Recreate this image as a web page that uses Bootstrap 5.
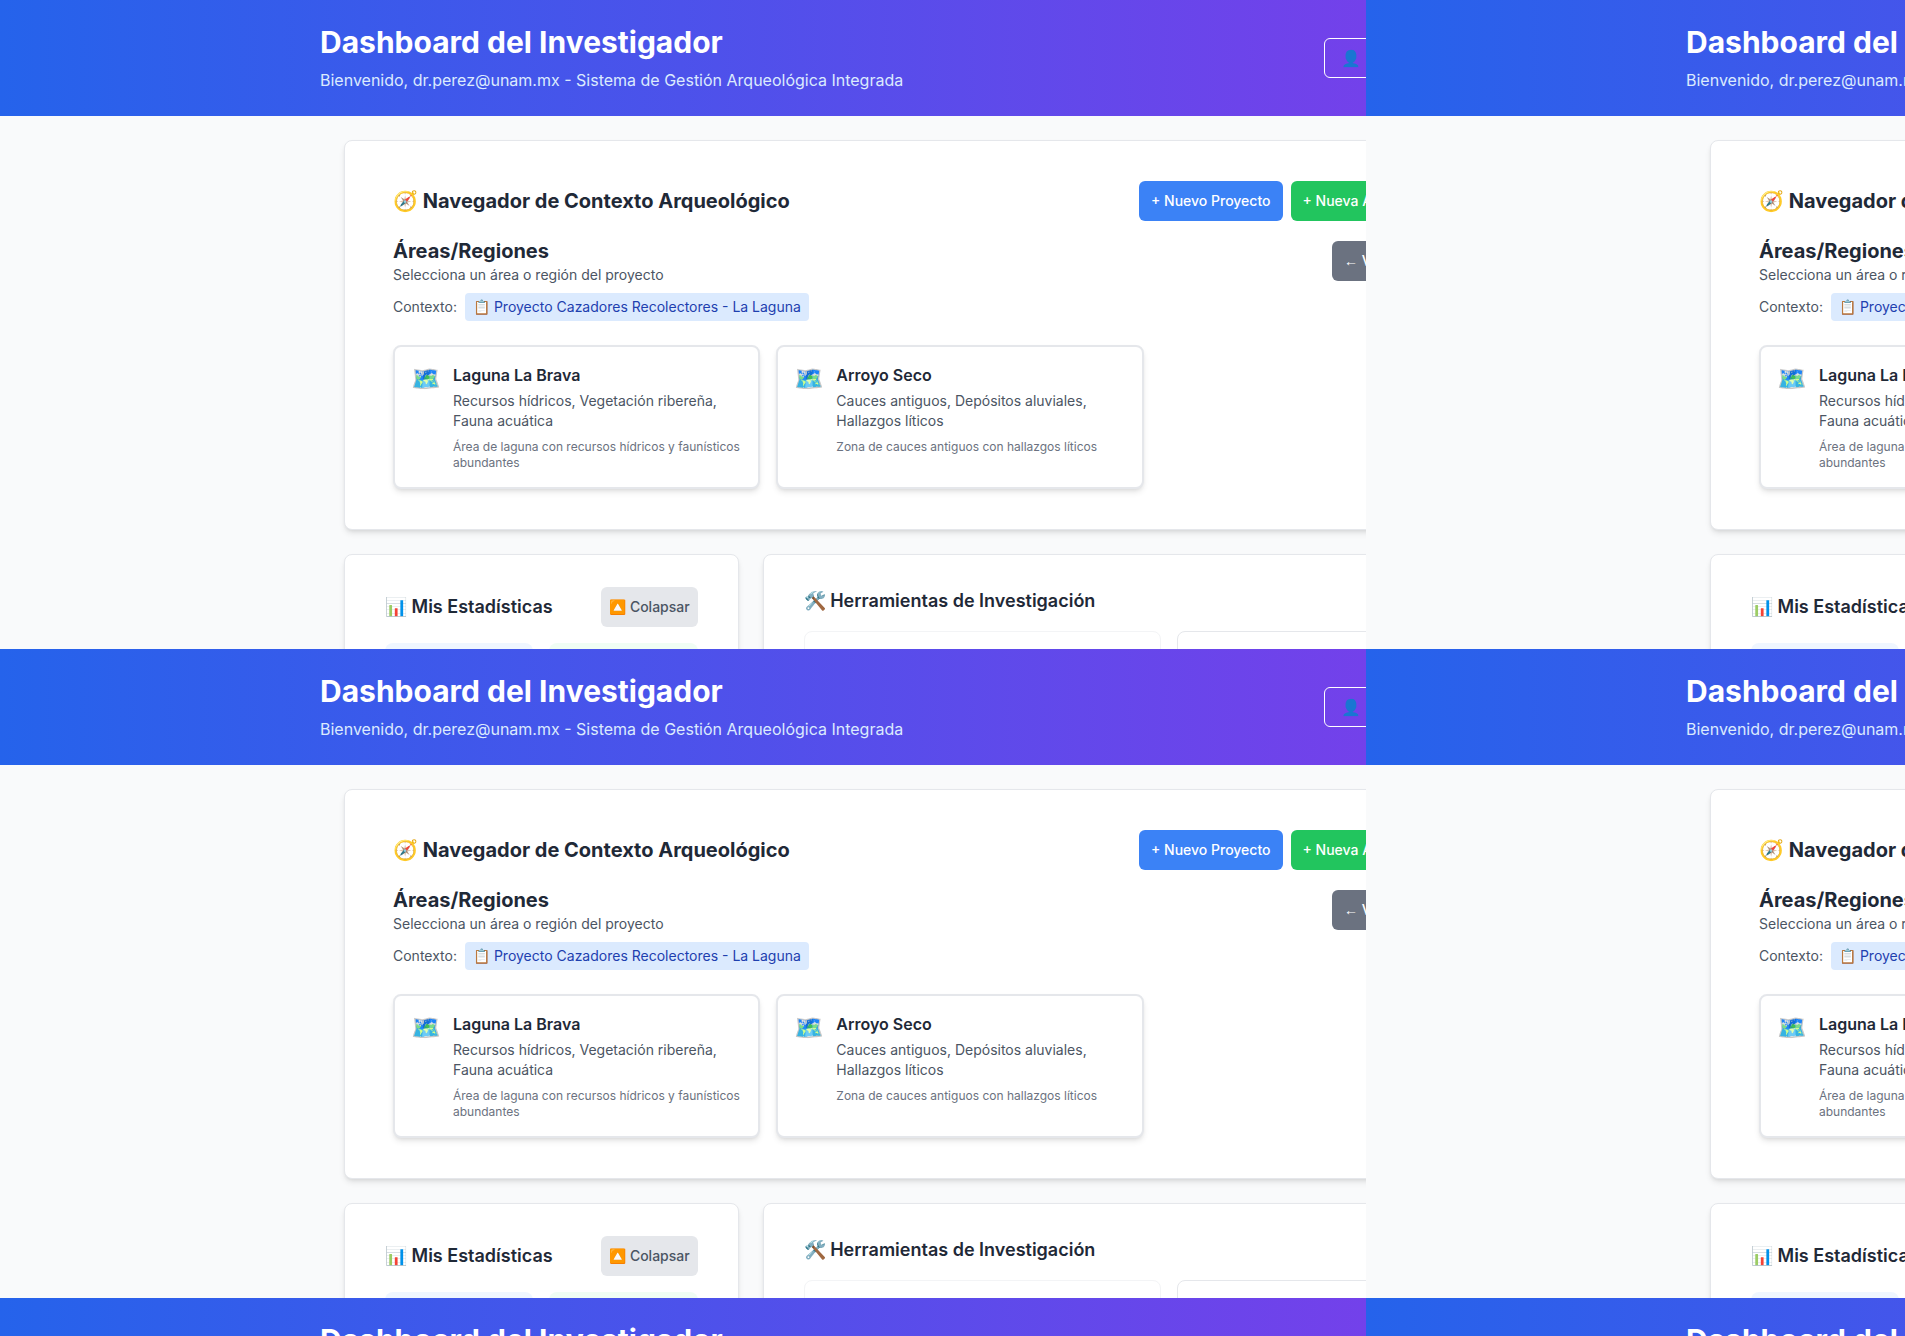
<!DOCTYPE html>
<html lang="es">
<head>
<meta charset="utf-8">
<meta name="viewport" content="width=device-width, initial-scale=1">
<title>Dashboard del Investigador</title>
<link href="https://cdn.jsdelivr.net/npm/bootstrap@5.3.0/dist/css/bootstrap.min.css" rel="stylesheet">
<style>
  body { font-family: Inter, "Noto Sans", sans-serif; font-size: 14px; line-height: 20px; color: #1f2937; background: #f9fafb; }
  h1, h2, h3, h4, p { margin: 0; }
  .wall { display: grid; grid-template-columns: repeat(2, 1366px); grid-auto-rows: 649px; height: 100vh; overflow: hidden; }
  .pane { overflow: hidden; background: #f9fafb; }
  .screen { width: 1920px; }
  .shell { max-width: 1280px; margin: 0 auto; }
  .topbar { background: linear-gradient(90deg, #2563eb, #9333ea); padding: 24px 0; }
  .topbar h1 { font-size: 30px; line-height: 36px; font-weight: 700; color: #fff; }
  .topbar p { font-size: 16px; line-height: 24px; color: #dbeafe; margin-top: 8px; }
  .btn { --bs-btn-font-size: 14px; --bs-btn-line-height: 20px; --bs-btn-font-weight: 500; --bs-btn-padding-x: 12px; --bs-btn-padding-y: 10px; --bs-btn-border-width: 0; --bs-btn-border-radius: 6px; --bs-btn-color: #fff; white-space: nowrap; }
  .btn-user { --bs-btn-font-size: 16px; --bs-btn-border-width: 1px; --bs-btn-border-color: #fff; --bs-btn-padding-x: 16px; --bs-btn-padding-y: 9px; }
  .btn-project { --bs-btn-bg: #3b82f6; }
  .btn-area { --bs-btn-bg: #22c55e; }
  .btn-back { --bs-btn-bg: #6b7280; }
  .btn-fold { --bs-btn-bg: #e5e7eb; --bs-btn-color: #4b5563; --bs-btn-padding-x: 8px; }
  .arrow { font-family: "Liberation Sans", sans-serif; line-height: 1; }
  .account { width: 276px; }
  .actions { width: 388px; }
  .backbox { width: 195px; }
  .panel { background: #fff; border: 1px solid #e5e7eb; border-radius: 8px; box-shadow: 0 4px 6px -1px rgba(0,0,0,.1), 0 2px 4px -2px rgba(0,0,0,.1); }
  .panel-nav { padding: 40px 48px; }
  .panel-side { padding: 32px 40px; min-height: 400px; }
  .panel h2 { font-size: 20px; line-height: 28px; font-weight: 700; }
  .panel h3 { font-size: 18px; line-height: 28px; font-weight: 600; }
  .soft { color: #4b5563; }
  .chip { background: #dbeafe; color: #1e40af; border-radius: 4px; padding: 4px 8px; }
  .thirds { display: grid; grid-template-columns: repeat(3, 1fr); gap: 16px; }
  .lower { display: grid; grid-template-columns: repeat(3, 1fr); gap: 24px; }
  .span-two { grid-column: span 2; }
  .halves { display: grid; grid-template-columns: 1fr 1fr; gap: 16px; margin-top: 16px; }
  .place { border: 2px solid #e5e7eb; border-radius: 8px; padding: 16px; gap: 12px; background: #fff; box-shadow: 0 4px 6px -1px rgba(0,0,0,.1), 0 2px 4px -2px rgba(0,0,0,.1); }
  .place-icon { font-size: 24px; line-height: 32px; }
  .place h4 { font-size: 16px; line-height: 24px; font-weight: 600; }
  .place-note { font-size: 12px; line-height: 16px; color: #6b7280; margin-top: 8px; }
  .tile { height: 96px; border-radius: 8px; }
  .tile-blue { background: #eff6ff; }
  .tile-green { background: #f0fdf4; }
  .tool { height: 160px; border: 1px solid #e5e7eb; border-radius: 8px; }
  .tool-faint { border-color: #f3f4f6; }
</style>
</head>
<body>
<div class="wall" id="wall"></div>

<template id="screen">
  <section class="pane">
    <div class="screen">
      <header class="topbar">
        <div class="shell d-flex justify-content-between align-items-center">
          <div>
            <h1>Dashboard del Investigador</h1>
            <p>Bienvenido, dr.perez@unam.mx - Sistema de Gestión Arqueológica Integrada</p>
          </div>
          <div class="account"><button type="button" class="btn btn-user" aria-label="Perfil">👤</button></div>
        </div>
      </header>
      <main class="shell p-4 d-flex flex-column gap-4">
        <section class="panel panel-nav">
          <div class="d-flex justify-content-between align-items-center mb-3">
            <h2>🧭 Navegador de Contexto Arqueológico</h2>
            <div class="actions d-flex gap-2">
              <button type="button" class="btn btn-project">+ Nuevo Proyecto</button>
              <button type="button" class="btn btn-area">+ Nueva Área</button>
            </div>
          </div>
          <div class="d-flex justify-content-between align-items-center mb-2">
            <div>
              <h2>Áreas/Regiones</h2>
              <p class="soft">Selecciona un área o región del proyecto</p>
            </div>
            <div class="backbox"><button type="button" class="btn btn-back"><span class="arrow">←</span> Volver</button></div>
          </div>
          <div class="d-flex align-items-center gap-2 mb-4">
            <span class="soft">Contexto:</span>
            <span class="chip">📋 Proyecto Cazadores Recolectores - La Laguna</span>
          </div>
          <div class="thirds">
            <article class="place d-flex">
              <span class="place-icon">🗺️</span>
              <div>
                <h4>Laguna La Brava</h4>
                <p class="soft mt-1">Recursos hídricos, Vegetación ribereña, Fauna acuática</p>
                <p class="place-note">Área de laguna con recursos hídricos y faunísticos abundantes</p>
              </div>
            </article>
            <article class="place d-flex">
              <span class="place-icon">🗺️</span>
              <div>
                <h4>Arroyo Seco</h4>
                <p class="soft mt-1">Cauces antiguos, Depósitos aluviales, Hallazgos líticos</p>
                <p class="place-note">Zona de cauces antiguos con hallazgos líticos</p>
              </div>
            </article>
          </div>
        </section>
        <div class="lower">
          <section class="panel panel-side">
            <div class="d-flex justify-content-between align-items-center">
              <h3>📊 Mis Estadísticas</h3>
              <button type="button" class="btn btn-fold">🔼 Colapsar</button>
            </div>
            <div class="halves">
              <div class="tile tile-blue"></div>
              <div class="tile tile-green"></div>
            </div>
          </section>
          <section class="panel panel-side span-two">
            <h3>🛠️ Herramientas de Investigación</h3>
            <div class="halves">
              <div class="tool tool-faint"></div>
              <div class="tool"></div>
            </div>
          </section>
        </div>
      </main>
    </div>
  </section>
</template>

<script>
  const wall = document.getElementById('wall');
  const screenTemplate = document.getElementById('screen');
  for (let i = 0; i < 6; i++) wall.append(screenTemplate.content.cloneNode(true));
</script>
<script src="https://cdn.jsdelivr.net/npm/bootstrap@5.3.0/dist/js/bootstrap.bundle.min.js"></script>
</body>
</html>
